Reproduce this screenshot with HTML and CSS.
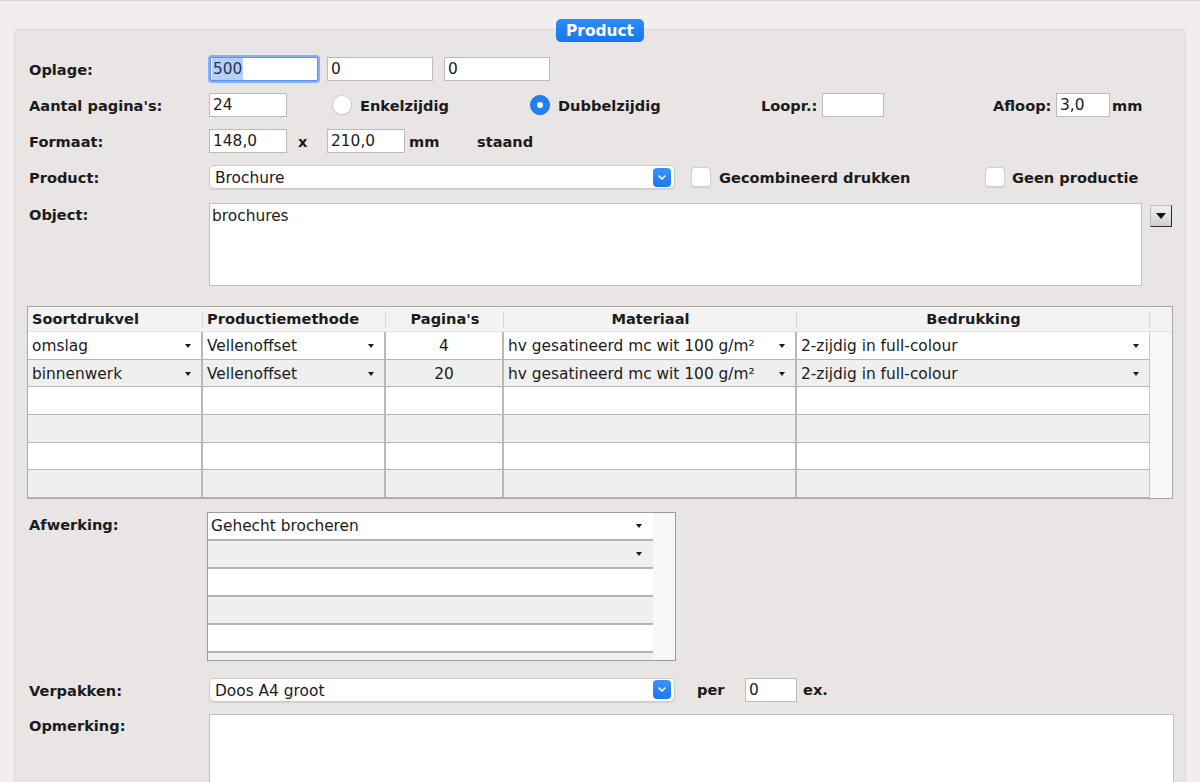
FILE: index.html
```html
<!DOCTYPE html>
<html>
<head>
<meta charset="utf-8">
<title>Product</title>
<link rel="stylesheet" href="styles.css">
</head>
<body>
<div class="panel">
  <div class="badge">Product</div>

  <div class="row">
    <div class="label">Oplage:</div>
    <div class="field focus w-oplage1"><span class="selected">500</span></div>
    <div class="field w-oplage2">0</div>
    <div class="field w-oplage3">0</div>
  </div>

  <div class="row">
    <div class="label">Aantal pagina's:</div>
    <div class="field w78">24</div>
    <div class="opt opt-enkel"><span class="radio"></span><span class="opt-text">Enkelzijdig</span></div>
    <div class="opt opt-dubbel"><span class="radio on"></span><span class="opt-text">Dubbelzijdig</span></div>
    <div class="pair pair-loopr"><span class="bold loopr-text">Loopr.:</span><div class="field w62"></div></div>
    <div class="pair"><span class="bold afloop-text">Afloop:</span><div class="field w54">3,0</div><span class="bold unit">mm</span></div>
  </div>

  <div class="row">
    <div class="label">Formaat:</div>
    <div class="field w78">148,0</div>
    <span class="bold times">x</span>
    <div class="field w78">210,0</div>
    <span class="bold mm2">mm</span>
    <span class="bold">staand</span>
  </div>

  <div class="row">
    <div class="label">Product:</div>
    <div class="select w-select"><span class="sel-text">Brochure</span><span class="sel-btn"><svg width="10" height="7" viewBox="0 0 10 7"><polyline points="2,2 5,5 8,2" fill="none" stroke="#fff" stroke-width="1.6" stroke-linecap="round" stroke-linejoin="round"/></svg></span></div>
    <div class="chk-opt chk-gecomb"><span class="checkbox"></span><span class="bold">Gecombineerd drukken</span></div>
    <div class="chk-opt chk-geen"><span class="checkbox"></span><span class="bold">Geen productie</span></div>
  </div>

  <div class="row-object">
    <div class="label label-top">Object:</div>
    <div class="textarea ta-object">brochures</div>
    <div class="mini-btn"><span class="tri-big"></span></div>
  </div>

  <div class="grid-table">
    <div class="trow thead">
      <div class="th th-left">Soortdrukvel</div>
      <div class="th th-left">Productiemethode</div>
      <div class="th">Pagina's</div>
      <div class="th">Materiaal</div>
      <div class="th">Bedrukking</div>
      <div class="th th-last"></div>
    </div>
    <div class="trow">
      <div class="td"><span>omslag</span><span class="tri"></span></div>
      <div class="td"><span>Vellenoffset</span><span class="tri"></span></div>
      <div class="td td-center">4</div>
      <div class="td"><span>hv gesatineerd mc wit 100 g/m²</span><span class="tri"></span></div>
      <div class="td"><span>2-zijdig in full-colour</span><span class="tri"></span></div>
      <div class="tfill"></div>
    </div>
    <div class="trow alt">
      <div class="td"><span>binnenwerk</span><span class="tri"></span></div>
      <div class="td"><span>Vellenoffset</span><span class="tri"></span></div>
      <div class="td td-center">20</div>
      <div class="td"><span>hv gesatineerd mc wit 100 g/m²</span><span class="tri"></span></div>
      <div class="td"><span>2-zijdig in full-colour</span><span class="tri"></span></div>
      <div class="tfill"></div>
    </div>
    <div class="trow">
      <div class="td"></div><div class="td"></div><div class="td"></div><div class="td"></div><div class="td"></div><div class="tfill"></div>
    </div>
    <div class="trow alt">
      <div class="td"></div><div class="td"></div><div class="td"></div><div class="td"></div><div class="td"></div><div class="tfill"></div>
    </div>
    <div class="trow">
      <div class="td"></div><div class="td"></div><div class="td"></div><div class="td"></div><div class="td"></div><div class="tfill"></div>
    </div>
    <div class="trow alt">
      <div class="td"></div><div class="td"></div><div class="td"></div><div class="td"></div><div class="td"></div><div class="tfill"></div>
    </div>
  </div>

  <div class="row-afwerking">
    <div class="label label-afw">Afwerking:</div>
    <div class="listbox">
      <div class="list">
        <div class="lrow"><span>Gehecht brocheren</span><span class="tri"></span></div>
        <div class="lrow alt"><span></span><span class="tri"></span></div>
        <div class="lrow"></div>
        <div class="lrow alt"></div>
        <div class="lrow"></div>
        <div class="lrow alt"></div>
      </div>
      <div class="lfill"></div>
    </div>
  </div>

  <div class="row row-verpak">
    <div class="label">Verpakken:</div>
    <div class="select w-select"><span class="sel-text">Doos A4 groot</span><span class="sel-btn"><svg width="10" height="7" viewBox="0 0 10 7"><polyline points="2,2 5,5 8,2" fill="none" stroke="#fff" stroke-width="1.6" stroke-linecap="round" stroke-linejoin="round"/></svg></span></div>
    <span class="bold per">per</span>
    <div class="field w52">0</div>
    <span class="bold ex">ex.</span>
  </div>

  <div class="row-opm">
    <div class="label label-top">Opmerking:</div>
    <div class="textarea ta-opm"></div>
  </div>
</div>
</body>
</html>
```

FILE: styles.css
```css
* { box-sizing: border-box; }

html, body { height: 100%; }

body {
  margin: 0;
  background: #f2eeee;
  border-top: 1px solid #d9d5d5;
  font-family: "DejaVu Sans", "Liberation Sans", sans-serif;
  font-size: 15.4px;
  color: #1b1b1b;
  overflow: hidden;
}

.panel {
  position: relative;
  margin: 28px 14px 0 14px;
  height: 753px;
  background: #e9e5e5;
  border: 1px solid #dcd8d8;
  border-bottom: none;
  border-radius: 5px 5px 0 0;
  padding: 27px 0 0 14px;
}

.badge {
  position: absolute;
  top: -11px;
  left: 50%;
  transform: translateX(-50%);
  width: 88px;
  height: 23px;
  border-radius: 5px;
  background: linear-gradient(#2c8cf8, #1576ee);
  color: #fff;
  font-weight: bold;
  font-size: 15.4px;
  line-height: 24px;
  text-align: center;
}

.bold { font-weight: bold; font-size: 14.6px; }

.row {
  display: flex;
  align-items: center;
  height: 24px;
  margin-bottom: 12px;
  white-space: nowrap;
}

.label {
  flex: none;
  width: 180px;
  font-weight: bold;
  font-size: 14.6px;
  padding-top: 1px;
}

.field {
  flex: none;
  height: 24px;
  background: #fff;
  border: 1px solid #bdbaba;
  padding: 0 3px;
  line-height: 22px;
  font-size: 15.4px;
}

.focus {
  border: 1px solid #5d93ee;
  box-shadow: 0 0 0 2px #86b0f3;
  border-radius: 2px;
  padding: 0 1px;
  line-height: 22px;
}

.selected {
  display: inline-block;
  background: #b5d0f8;
  height: 22px;
  padding: 0 1px;
  color: #2a3550;
}

.w-oplage1 { width: 108px; margin-left: 1px; }
.w-oplage2 { width: 106px; margin-left: 9px; }
.w-oplage3 { width: 106px; margin-left: 11px; }
.w78 { width: 78px; }
.w62 { width: 62px; }
.w54 { width: 54px; }
.w52 { width: 52px; }

.opt { display: flex; align-items: center; flex: none; }
.opt-text { font-weight: bold; font-size: 14.6px; margin-left: 8px; }
.opt-enkel { margin-left: 45px; width: 198px; }
.opt-dubbel { width: 231px; }

.radio {
  width: 20px;
  height: 20px;
  border-radius: 50%;
  background: #fff;
  border: 1px solid #d4d0d0;
  box-shadow: 0 0.5px 1px rgba(0,0,0,0.12);
  flex: none;
}
.radio.on {
  background: #1f7ff4;
  border-color: #1a74e4;
  position: relative;
}
.radio.on::after {
  content: "";
  position: absolute;
  left: 6px;
  top: 6px;
  width: 6px;
  height: 6px;
  border-radius: 50%;
  background: #fff;
}

.pair { display: flex; align-items: center; flex: none; }
.pair-loopr { width: 232px; }
.loopr-text { width: 61px; }
.afloop-text { width: 63px; }
.unit { margin-left: 2px; }

.times { width: 40px; padding-left: 11px; flex: none; }
.mm2 { width: 72px; padding-left: 4px; flex: none; }

.select {
  flex: none;
  display: flex;
  align-items: center;
  justify-content: space-between;
  height: 24px;
  background: #fff;
  border: 1px solid #cfcbcb;
  border-radius: 5px;
  box-shadow: 0 1px 1px rgba(0,0,0,0.08);
  padding: 0 2px 0 5px;
  font-size: 15.4px;
}
.sel-text { padding-top: 2px; }
.w-select { width: 466px; }

.sel-btn {
  width: 18px;
  height: 19px;
  border-radius: 4px;
  background: linear-gradient(#3a93fa, #1a78ef);
  display: flex;
  align-items: center;
  justify-content: center;
  margin-right: 1px;
}

.chk-opt { display: flex; align-items: center; flex: none; }
.chk-opt .bold { margin-left: 8px; }
.chk-gecomb { margin-left: 16px; width: 294px; }
.chk-geen .bold { margin-left: 7px; }

.checkbox {
  width: 20px;
  height: 20px;
  border-radius: 4px;
  background: #fff;
  border: 1px solid #d4d0d0;
  box-shadow: 0 0.5px 1px rgba(0,0,0,0.1);
  flex: none;
}

.row-object {
  display: flex;
  align-items: flex-start;
  margin-top: 14px;
}
.label-top { padding-top: 3px; }

.textarea {
  background: #fff;
  border: 1px solid #c2bfbf;
  padding: 1px 2px;
  font-size: 15.4px;
  line-height: 22px;
  flex: none;
}
.ta-object { width: 933px; height: 83px; }

.mini-btn {
  flex: none;
  width: 22px;
  height: 22px;
  margin: 2px 0 0 8px;
  background: linear-gradient(#f2f2f2, #cfcfcf);
  border: 1px solid #bdbdbd;
  border-right-color: #2b2b2b;
  border-bottom-color: #2b2b2b;
  display: flex;
  align-items: center;
  justify-content: center;
}
.tri-big {
  width: 0;
  height: 0;
  border-left: 5px solid transparent;
  border-right: 5px solid transparent;
  border-top: 6px solid #111;
}

.grid-table {
  margin: 20px 0 0 -2px;
  width: 1146px;
  border: 1px solid #a9a6a6;
  background: #fff;
}

.trow {
  display: grid;
  grid-template-columns: 175px 183px 118px 293px 353px 22px;
  height: 27.67px;
}
.thead {
  background: #f3f3f3;
  border-bottom: 1px solid #e3e3e3;
  height: 25px;
}
.th {
  font-weight: bold;
  font-size: 14.6px;
  text-align: center;
  line-height: 24px;
  position: relative;
}
.th::after {
  content: "";
  position: absolute;
  right: 0;
  top: 4px;
  bottom: 3px;
  width: 1px;
  background: #d7d7d7;
}
.th-last::after { display: none; }
.th-left { text-align: left; padding-left: 4px; }

.td {
  display: flex;
  align-items: center;
  justify-content: space-between;
  padding: 2px 10px 0 4px;
  border-right: 2px solid #b9b9b9;
  border-bottom: 1px solid #b5b5b5;
  font-size: 15.4px;
  white-space: nowrap;
}
.td:nth-child(5) { border-right: 1px solid #c9c9c9; }
.td-center { justify-content: center; padding: 2px 0 0 0; }
.trow.alt .td { background: #efefef; }
.tfill { background: #f7f7f7; }

.tri {
  width: 0;
  height: 0;
  border-left: 3.5px solid transparent;
  border-right: 3.5px solid transparent;
  border-top: 4px solid #1b1b1b;
  flex: none;
}

.row-afwerking {
  display: flex;
  align-items: flex-start;
  margin-top: 13px;
}
.label-afw { width: 178px; padding-top: 4px; }

.listbox {
  flex: none;
  display: flex;
  width: 469px;
  height: 149px;
  border: 1px solid #9e9b9b;
  background: #f7f7f7;
  overflow: hidden;
}
.list { width: 445px; flex: none; background: #fff; }
.lrow {
  height: 28px;
  display: flex;
  align-items: center;
  justify-content: space-between;
  padding: 1px 11px 0 3px;
  border-bottom: 2px solid #b3b3b3;
  background: #fff;
  font-size: 15.4px;
}
.lrow.alt { background: #efefef; }
.lfill { flex: 1; background: #f7f7f7; }

.row-verpak { margin-top: 17px; }
.per { width: 48px; margin-left: 22px; flex: none; }
.ex { margin-left: 6px; }

.row-opm {
  display: flex;
  align-items: flex-start;
}
.ta-opm { width: 965px; height: 68px; border-bottom: none; }
```
